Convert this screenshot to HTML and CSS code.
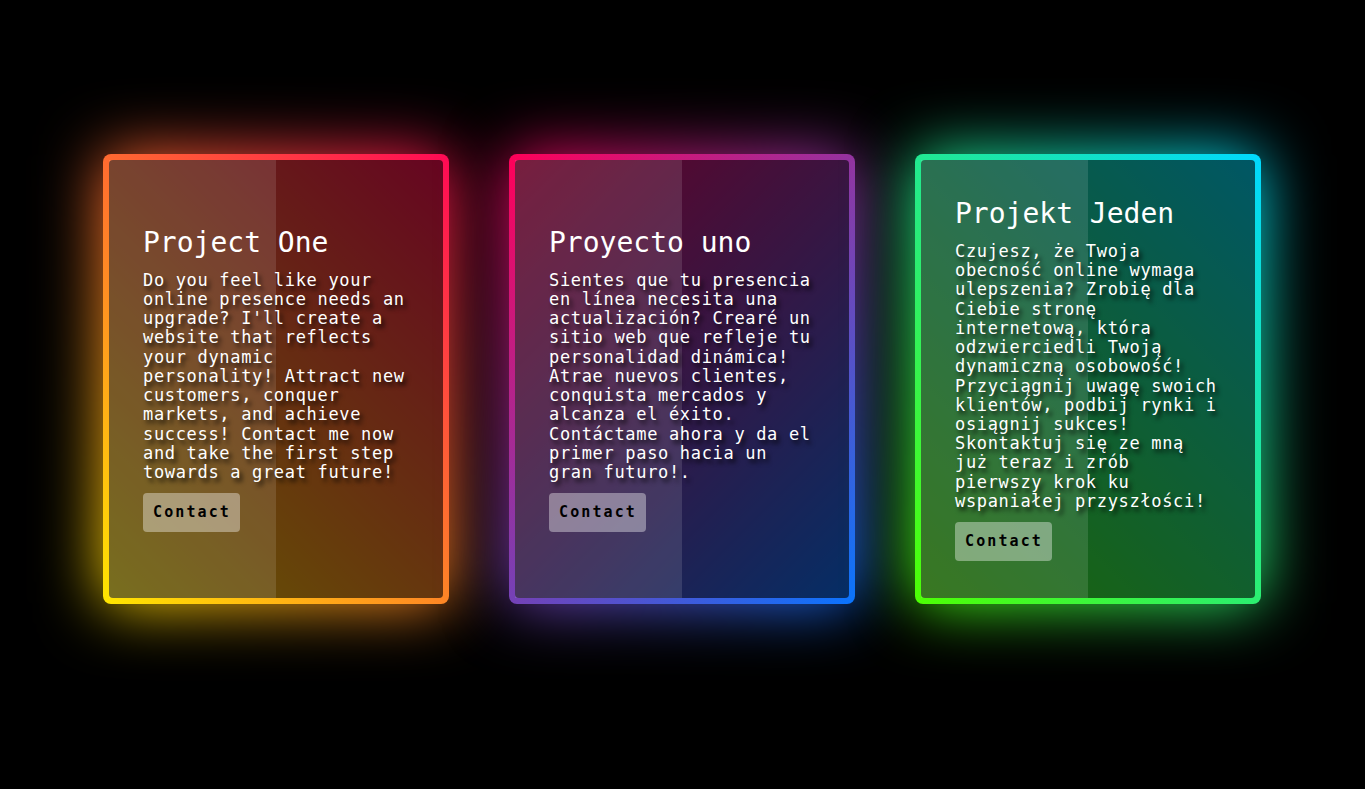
FILE: index.html
```html
<!DOCTYPE html>
<html lang="en">
<head>
<meta charset="utf-8">
<title>Projects</title>
<link rel="stylesheet" href="styles.css">
</head>
<body>
<main class="stage">
  <article class="card card--sunset">
    <div class="card__glow"></div>
    <div class="card__ring"></div>
    <div class="card__fill"></div>
    <div class="card__glass"></div>
    <div class="card__content">
      <h2 class="card__title">Project One</h2>
      <p class="card__text">Do you feel like your online presence needs an upgrade? I'll create a website that reflects your dynamic personality! Attract new customers, conquer markets, and achieve success! Contact me now and take the first step towards a great future!</p>
      <a class="card__btn" href="#">Contact</a>
    </div>
  </article>
  <article class="card card--violet">
    <div class="card__glow"></div>
    <div class="card__ring"></div>
    <div class="card__fill"></div>
    <div class="card__glass"></div>
    <div class="card__content">
      <h2 class="card__title">Proyecto uno</h2>
      <p class="card__text">Sientes que tu presencia en línea necesita una actualización? Crearé un sitio web que refleje tu personalidad dinámica! Atrae nuevos clientes, conquista mercados y alcanza el éxito. Contáctame ahora y da el primer paso hacia un gran futuro!.</p>
      <a class="card__btn" href="#">Contact</a>
    </div>
  </article>
  <article class="card card--lime">
    <div class="card__glow"></div>
    <div class="card__ring"></div>
    <div class="card__fill"></div>
    <div class="card__glass"></div>
    <div class="card__content">
      <h2 class="card__title">Projekt Jeden</h2>
      <p class="card__text">Czujesz, że Twoja obecność online wymaga ulepszenia? Zrobię dla Ciebie stronę internetową, która odzwierciedli Twoją dynamiczną osobowość! Przyciągnij uwagę swoich klientów, podbij rynki i osiągnij sukces! Skontaktuj się ze mną już teraz i zrób pierwszy krok ku wspaniałej przyszłości!</p>
      <a class="card__btn" href="#">Contact</a>
    </div>
  </article>
</main>
</body>
</html>
```

FILE: styles.css
```css
* {
  box-sizing: border-box;
}

html,
body {
  margin: 0;
  height: 100%;
  background: #000;
}

body {
  font-family: "DejaVu Sans Mono", "Liberation Mono", monospace;
  color: #fff;
  overflow: hidden;
}

.stage {
  display: flex;
  justify-content: center;
  align-items: flex-start;
  gap: 60px;
  padding: 154px 1px 0 0;
}

.card {
  position: relative;
  width: 346px;
  height: 450px;
  flex: none;
}

.card--sunset {
  --grad: linear-gradient(45deg, #ffe600, #ff0a55);
}

.card--violet {
  --grad: linear-gradient(135deg, #ff0058, #0a74ff);
}

.card--lime {
  --grad: linear-gradient(45deg, #4dff03, #00d8ff);
}

.card__glow,
.card__ring {
  position: absolute;
  inset: 0;
  border-radius: 8px;
  background: var(--grad);
}

.card__glow {
  filter: blur(32px);
}

.card__fill {
  position: absolute;
  inset: 6px;
  border-radius: 4px;
  background: rgba(0, 0, 0, 0.6);
}

.card__glass {
  position: absolute;
  top: 6px;
  bottom: 6px;
  left: 6px;
  right: 50%;
  background: rgba(255, 255, 255, 0.12);
}

.card__content {
  position: relative;
  height: 100%;
  display: flex;
  flex-direction: column;
  justify-content: center;
  align-items: flex-start;
  padding: 0 40px;
}

.card__title {
  margin: 0 0 11px;
  font-size: 28px;
  line-height: 34px;
  font-weight: normal;
}

.card__text {
  margin: 0 0 11px;
  font-size: 17px;
  line-height: 19.2px;
  letter-spacing: 0.67px;
  text-shadow: 3px 4px 4px rgba(0, 0, 0, 0.75);
}

.card__btn {
  display: inline-block;
  padding: 10px 9px 10px 10px;
  font-size: 15px;
  line-height: 19px;
  font-weight: bold;
  letter-spacing: 2.1px;
  color: #000;
  text-decoration: none;
  background: rgba(255, 255, 255, 0.38);
  border-radius: 4px;
}
```
